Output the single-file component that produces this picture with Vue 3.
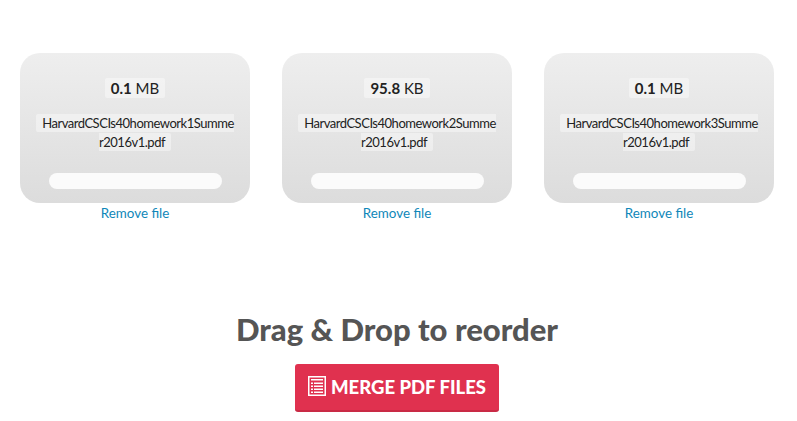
<template>
  <div class="page">
    <div class="files">
      <div class="file-col" v-for="file in files" :key="file.name">
        <div class="card">
          <div class="size"><span class="chip"><strong>{{ file.size }}</strong> {{ file.unit }}</span></div>
          <div class="name"><span class="name-chip">{{ file.name }}</span></div>
          <div class="progress"></div>
        </div>
        <a class="remove" href="#">Remove file</a>
      </div>
    </div>

    <h2 class="title">Drag &amp; Drop to reorder</h2>

    <button class="merge">
      <svg class="icon" width="18" height="20" viewBox="0 0 18 20">
        <rect x="0.75" y="0.75" width="16.5" height="18.5" fill="none" stroke="#fff" stroke-width="1.5" />
        <rect x="3" y="3" width="12" height="1.5" fill="#fff" />
        <g fill="#fff">
          <rect x="3" y="6.5" width="2" height="1.5" />
          <rect x="6" y="6.5" width="9" height="1.5" />
          <rect x="3" y="9.5" width="2" height="1.5" />
          <rect x="6" y="9.5" width="9" height="1.5" />
          <rect x="3" y="12.5" width="2" height="1.5" />
          <rect x="6" y="12.5" width="9" height="1.5" />
          <rect x="3" y="15.5" width="2" height="1.5" />
          <rect x="6" y="15.5" width="9" height="1.5" />
        </g>
      </svg>
      MERGE PDF FILES
    </button>
  </div>
</template>

<script setup>
const files = [
  { size: '0.1', unit: 'MB', name: 'HarvardCSCIs40homework1Summer2016v1.pdf' },
  { size: '95.8', unit: 'KB', name: 'HarvardCSCIs40homework2Summer2016v1.pdf' },
  { size: '0.1', unit: 'MB', name: 'HarvardCSCIs40homework3Summer2016v1.pdf' }
]
</script>

<style scoped>
.page {
  height: 421px;
  padding: 53px 3px 0 0;
  box-sizing: border-box;
  overflow: hidden;
  background: #fff;
  font-family: Lato, "Noto Sans", sans-serif;
  display: flex;
  flex-direction: column;
  align-items: center;
}

.files {
  display: flex;
  gap: 32px;
  align-self: flex-start;
  margin-left: 20px;
}

.file-col {
  width: 230px;
  text-align: center;
}

.card {
  height: 150px;
  box-sizing: border-box;
  padding-top: 25px;
  border-radius: 20px;
  background: linear-gradient(to bottom, #eeeeee, #dcdcdc);
  display: flex;
  flex-direction: column;
  align-items: center;
}

.size {
  height: 20px;
  font-size: 15px;
  line-height: 20px;
  color: #222;
}

.chip {
  display: inline-block;
  padding: 0 6px;
  border-radius: 2px;
  background: rgba(255, 255, 255, 0.4);
}

.name {
  margin-top: 16px;
  width: 200px;
  font-size: 13px;
  letter-spacing: -0.48px;
  line-height: 19px;
  color: #222;
  word-break: break-all;
}

.name-chip {
  padding: 1px 6px;
  border-radius: 2px;
  background: rgba(255, 255, 255, 0.4);
}

.progress {
  margin-top: 21px;
  width: 173px;
  height: 16px;
  border-radius: 8px;
  background: #fbfbfb;
}

.remove {
  display: block;
  margin-top: 1px;
  font-size: 13.4px;
  line-height: 19px;
  color: #0f87b9;
  text-decoration: none;
}

.title {
  margin: 88px 0 0;
  font-size: 31px;
  line-height: 36px;
  font-weight: 900;
  color: #555;
}

.merge {
  margin-top: 17px;
  width: 204px;
  height: 48px;
  border: none;
  border-bottom: 2px solid #c92a45;
  border-radius: 3px;
  background: #e0314f;
  color: #fff;
  font-family: inherit;
  font-size: 18.5px;
  font-weight: 900;
  display: flex;
  align-items: center;
  justify-content: center;
  gap: 5px;
  padding: 0;
}

.icon {
  margin-top: -3px;
}
</style>
